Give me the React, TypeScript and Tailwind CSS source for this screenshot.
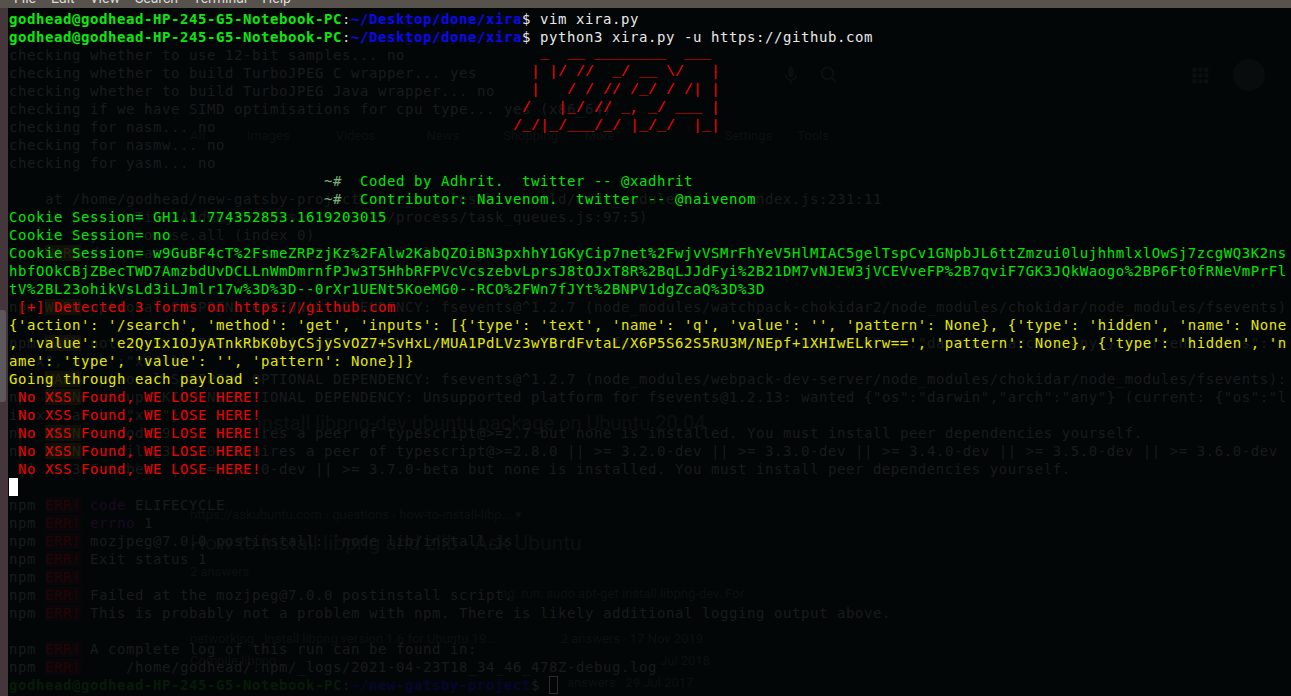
import React from "react";

const Row = ({ children }: { children?: React.ReactNode }) => (
  <div className="h-[18px] leading-[18px] whitespace-pre">{children}</div>
);

const Prompt = ({ path }: { path: string }) => (
  <>
    <span className="font-bold text-[#0fe60f]">godhead@godhead-HP-245-G5-Notebook-PC</span>
    <span className="text-[#d0d0d0]">:</span>
    <span className="font-bold text-[#0a0ae6]">{path}</span>
    <span className="text-[#e8e8e8]">$ </span>
  </>
);

const GhostPrompt = ({ end }: { end?: boolean }) => (
  <>
    <span className="font-bold text-[#061c08]">godhead@godhead-HP-245-G5-Notebook-PC</span>
    <span className="text-[#191c1c]">:</span>
    <span className="font-bold text-[#06062e]">~/new-gatsby-project</span>
    {end ? <span className="text-[#191c1c]">$ </span> : null}
  </>
);

const Warn = ({ children }: { children?: React.ReactNode }) => (
  <Row>
    npm <span className="bg-[#100f08] text-[#252310]">WARN</span> {children}
  </Row>
);

const Err = ({ children }: { children?: React.ReactNode }) => (
  <Row>
    npm <span className="bg-[#0a0508] text-[#230509]">ERR!</span> {children}
  </Row>
);

const ghostTop = [
  "checking whether to use 12-bit samples... no",
  "checking whether to build TurboJPEG C wrapper... yes",
  "checking whether to build TurboJPEG Java wrapper... no",
  "checking if we have SIMD optimisations for cpu type... yes (x86_64)",
  "checking for nasm... no",
  "checking for nasmw... no",
  "checking for yasm... no",
  "",
  "    at /home/godhead/new-gatsby-project/node_modules/bin-build/node_modules/execa/index.js:231:11",
  "    at processTicksAndRejections (internal/process/task_queues.js:97:5)",
  "    at async Promise.all (index 0)",
];

const GhostLayer = () => (
  <div className="col-start-1 row-start-1 pl-px pt-[2px] text-[#191c1c]">
    <Row><GhostPrompt /></Row>
    <Row><GhostPrompt /></Row>
    {ghostTop.map((l, i) => (
      <Row key={i}>{l}</Row>
    ))}
    <Warn>deprecated <span className="text-[#1c0a20]">har-validator</span>@5.1.5: this library is no longer supported</Warn>
    <Row />
    <Row />
    <Warn>optional SKIPPING OPTIONAL DEPENDENCY: fsevents@^1.2.7 (node_modules/watchpack-chokidar2/node_modules/chokidar/node_modules/fsevents)</Warn>
    <Row>:</Row>
    <Warn>{'notsup SKIPPING OPTIONAL DEPENDENCY: Unsupported platform for fsevents@1.2.13: wanted {"os":"darwin","arch":"any"} (current: {"os":"l'}</Warn>
    <Row>{'inux","arch":"x64"})'}</Row>
    <Warn>optional SKIPPING OPTIONAL DEPENDENCY: fsevents@^1.2.7 (node_modules/webpack-dev-server/node_modules/chokidar/node_modules/fsevents):</Warn>
    <Warn>{'notsup SKIPPING OPTIONAL DEPENDENCY: Unsupported platform for fsevents@1.2.13: wanted {"os":"darwin","arch":"any"} (current: {"os":"l'}</Warn>
    <Row>{'inux","arch":"x64"})'}</Row>
    <Warn>ts-node@9.1.1 requires a peer of typescript@&gt;=2.7 but none is installed. You must install peer dependencies yourself.</Warn>
    <Warn>tsutils@3.21.0 requires a peer of typescript@&gt;=2.8.0 || &gt;= 3.2.0-dev || &gt;= 3.3.0-dev || &gt;= 3.4.0-dev || &gt;= 3.5.0-dev || &gt;= 3.6.0-dev</Warn>
    <Row> || &gt;= 3.6.0-beta || &gt;= 3.7.0-dev || &gt;= 3.7.0-beta but none is installed. You must install peer dependencies yourself.</Row>
    <Row />
    <Err><span className="text-[#1c0a20]">code</span> ELIFECYCLE</Err>
    <Err><span className="text-[#1c0a20]">errno</span> 1</Err>
    <Err>mozjpeg@7.0.0 postinstall: `node lib/install.js`</Err>
    <Err>Exit status 1</Err>
    <Err />
    <Err>Failed at the mozjpeg@7.0.0 postinstall script.</Err>
    <Err>This is probably not a problem with npm. There is likely additional logging output above.</Err>
    <Row />
    <Err>A complete log of this run can be found in:</Err>
    <Err>    /home/godhead/.npm/_logs/2021-04-23T18_34_46_478Z-debug.log</Err>
    <Row>
      <GhostPrompt end />
      <span className="inline-block h-[18px] w-[9px] border border-[#2c2c2c] align-top" />
    </Row>
  </div>
);

const BrightLayer = () => (
  <div className="col-start-1 row-start-1 pl-px pt-[2px]">
    <Row><Prompt path="~/Desktop/done/xira" /><span className="text-[#e8e8e8]">vim xira.py</span></Row>
    <Row><Prompt path="~/Desktop/done/xira" /><span className="text-[#e8e8e8]">python3 xira.py -u https://github.com</span></Row>
    <div className="font-['Liberation_Mono',monospace] text-[15px] tracking-normal text-[#ff0000]">
      <Row>{"                                                           _  __ ________  ___"}</Row>
      <Row>{"                                                          | |/ //  _/ __ \\/   |"}</Row>
      <Row>{"                                                          |   / / // /_/ / /| |"}</Row>
      <Row>{"                                                         /   |_/ // _, _/ ___ |"}</Row>
      <Row>{"                                                        /_/|_/___/_/ |_/_/  |_|"}</Row>
    </div>
    <Row />
    <Row />
    <div className="text-[#00e600]">
      <Row>{"                                   "}<span className="text-[#7ab07a]">~#</span>{"  Coded by Adhrit.  twitter -- @xadhrit"}</Row>
      <Row>{"                                   "}<span className="text-[#7ab07a]">~#</span>{"  Contributor: Naivenom.  twitter -- @naivenom"}</Row>
      <Row>Cookie Session= GH1.1.774352853.1619203015</Row>
      <Row>Cookie Session= no</Row>
      <Row>Cookie Session= w9GuBF4cT%2FsmeZRPzjKz%2FAlw2KabQZOiBN3pxhhY1GKyCip7net%2FwjvVSMrFhYeV5HlMIAC5gelTspCv1GNpbJL6ttZmzui0lujhhmlxlOwSj7zcgWQ3K2ns</Row>
      <Row>hbfOOkCBjZBecTWD7AmzbdUvDCLLnWmDmrnfPJw3T5HhbRFPVcVcszebvLprsJ8tOJxT8R%2BqLJJdFyi%2B21DM7vNJEW3jVCEVveFP%2B7qviF7GK3JQkWaogo%2BP6Ft0fRNeVmPrFl</Row>
      <Row>tV%2BL23ohikVsLd3iLJmlr17w%3D%3D--0rXr1UENt5KoeMG0--RCO%2FWn7fJYt%2BNPV1dgZcaQ%3D%3D</Row>
    </div>
    <Row><span className="text-[#f00000]"> [+] Detected 3 forms on https://github.com</span></Row>
    <div className="text-[#e6e600]">
      <Row>{"{'action': '/search', 'method': 'get', 'inputs': [{'type': 'text', 'name': 'q', 'value': '', 'pattern': None}, {'type': 'hidden', 'name': None"}</Row>
      <Row>{", 'value': 'e2QyIx1OJyATnkRbK0byCSjySvOZ7+SvHxL/MUA1PdLVz3wYBrdFvtaL/X6P5S62S5RU3M/NEpf+1XHIwELkrw==', 'pattern': None}, {'type': 'hidden', 'n"}</Row>
      <Row>{"ame': 'type', 'value': '', 'pattern': None}]}"}</Row>
      <Row>Going through each payload :</Row>
    </div>
    <div className="text-[#f00000]">
      <Row> No XSS Found, WE LOSE HERE!</Row>
      <Row> No XSS Found, WE LOSE HERE!</Row>
      <Row> No XSS Found, WE LOSE HERE!</Row>
      <Row> No XSS Found, WE LOSE HERE!</Row>
      <Row> No XSS Found, WE LOSE HERE!</Row>
    </div>
    <Row><span className="inline-block h-[18px] w-[9px] bg-white align-top" /></Row>
  </div>
);

const WebLayer = () => (
  <div className="col-start-1 row-start-1 flex flex-col pl-[174px] font-['Roboto',sans-serif] tracking-normal text-[#0d1010]">
    <div className="flex h-[110px] items-start justify-end pr-[26px] pt-[55px]">
      <svg viewBox="0 0 24 24" width="20" height="24" className="mr-[18px] text-[#0c0f0f]" fill="currentColor">
        <path d="M12 15a3 3 0 0 0 3-3V5a3 3 0 0 0-6 0v7a3 3 0 0 0 3 3zm5-3a5 5 0 0 1-10 0H5a7 7 0 0 0 6 6.9V23h2v-4.1A7 7 0 0 0 19 12z" />
      </svg>
      <svg viewBox="0 0 24 24" width="20" height="24" className="mr-[351px] text-[#0c0f0f]" fill="none" stroke="currentColor" strokeWidth="2.5">
        <circle cx="10" cy="10" r="7" />
        <path d="M15 15l6 6" />
      </svg>
      <svg viewBox="0 0 24 24" width="20" height="24" className="mr-[23px] text-[#0c0f0f]" fill="currentColor">
        <path d="M3 3h5v5H3zM10 3h5v5h-5zM17 3h5v5h-5zM3 10h5v5H3zM10 10h5v5h-5zM17 10h5v5h-5zM3 17h5v5H3zM10 17h5v5h-5zM17 17h5v5h-5z" />
      </svg>
      <div className="-mt-[4px] h-[32px] w-[32px] rounded-full bg-[#090c0c]" />
    </div>
    <div className="flex h-[36px] items-center text-[13px]">
      <span className="ml-[8px]">All</span>
      <span className="ml-[42px]">Images</span>
      <span className="ml-[46px]">Videos</span>
      <span className="ml-[51px]">News</span>
      <span className="ml-[44px]">Shopping</span>
      <span className="ml-[27px]">More</span>
      <span className="ml-[110px]">Settings</span>
      <span className="ml-[25px]">Tools</span>
    </div>
    <div className="flex h-[281px] items-end pl-[75px] text-[20px] leading-[24px]">install libpng-dev ubuntu package on Ubuntu 20.04</div>
    <div className="h-[70px]" />
    <div className="flex h-[20px] items-center pl-[8px] text-[13px]">https://askubuntu.com › questions › how-to-install-libp... ▾</div>
    <div className="flex h-[38px] items-center pl-[8px] text-[21px]">How to install libpng and zlib - Ask Ubuntu</div>
    <div className="flex h-[18px] items-center pl-[8px] text-[13px]">2 answers</div>
    <div className="flex h-[26px] items-center pl-[318px] text-[13px]">ng. run: sudo apt-get install libpng-dev. For</div>
    <div className="flex h-[41px] w-[521px] items-end justify-between pl-[8px] text-[13px]">
      <span>networking · Install libpng version 1.6 for Ubuntu 19 ...</span>
      <span>2 answers · 17 Nov 2019</span>
    </div>
    <div className="flex h-[22px] w-[528px] items-end justify-between pl-[8px] text-[13px]">
      <span>Compile libpng ...</span>
      <span>Jul 2018</span>
    </div>
    <div className="flex h-[22px] items-end pl-[385px] text-[13px]">answers · 29 Jul 2017</div>
  </div>
);

export default function App() {
  return (
    <div className="flex h-[696px] w-[1291px] flex-col overflow-hidden bg-[#020607]">
      <div className="flex h-[8px] shrink-0 items-end gap-[15px] overflow-hidden bg-[#57524c] pb-[3px] pl-[14px] font-['Roboto',sans-serif] text-[14px] leading-[14px] text-[#dcdad5]">
        <span>File</span>
        <span>Edit</span>
        <span>View</span>
        <span>Search</span>
        <span>Terminal</span>
        <span>Help</span>
      </div>
      <div className="flex min-h-0 flex-1">
        <div className="w-[8px] shrink-0 bg-[#45363c]">
          <div className="mt-[302px] h-[92px] w-[6px] rounded-r-[3px] bg-[#5c575b]" />
        </div>
        <div className="grid flex-1 overflow-hidden font-['DejaVu_Sans_Mono',monospace] text-[14px] tracking-[0.57px]">
          <WebLayer />
          <GhostLayer />
          <BrightLayer />
        </div>
      </div>
    </div>
  );
}
